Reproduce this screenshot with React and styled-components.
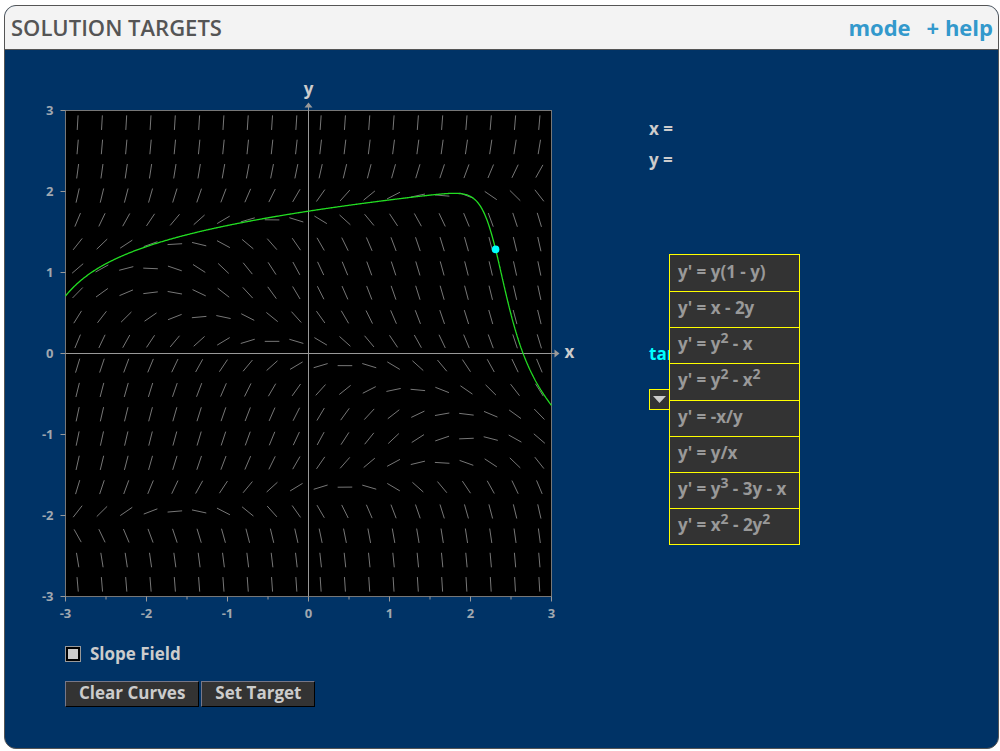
import React, { useState } from "react";
import styled, { createGlobalStyle } from "styled-components";

const GlobalStyle = createGlobalStyle`
  * {
    box-sizing: border-box;
  }

  body {
    margin: 0;
    background-color: #fff;
    font-family: "Open Sans", "Noto Sans", sans-serif;
    font-weight: 700;
  }
`;

const Frame = styled.main`
  display: flex;
  flex-direction: column;
  min-height: calc(100vh - 7px);
  margin: 5px 1px 2px 4px;
  border: 1px solid #555;
  border-radius: 12px;
  background-color: #003366;
  overflow: hidden;
`;

const Header = styled.header`
  display: flex;
  align-items: center;
  justify-content: space-between;
  height: 44px;
  padding: 0 5px 2px 6px;
  border-bottom: 1px solid #555;
  background-color: #f3f3f3;
`;

const Title = styled.h1`
  margin: 0;
  font-size: 22px;
  font-weight: 600;
  line-height: 30px;
  color: #555;
`;

const Nav = styled.nav`
  display: flex;
  gap: 16px;
`;

const NavLink = styled.a`
  font-size: 22px;
  line-height: 30px;
  color: #3399cc;
  text-decoration: none;
`;

const Body = styled.div`
  display: flex;
  gap: 64px;
  padding: 30px 35px;
`;

const Plot = styled.svg`
  display: block;
  width: 545px;
  height: 545px;
  overflow: visible;
`;

const AxisName = styled.text`
  font-size: 17px;
  fill: #ccc;
  text-anchor: middle;
`;

const TickLabel = styled.text`
  font-size: 13px;
  fill: #a0a8b0;
  text-anchor: ${(props) => props.$anchor || "middle"};
`;

const Controls = styled.div`
  display: flex;
  flex-direction: column;
  gap: 14px;
  padding: 16px 25px 0;
`;

const CheckLabel = styled.label`
  display: flex;
  align-items: center;
  gap: 9px;
  font-size: 17px;
  line-height: 26px;
  color: #ccc;
`;

const Checkbox = styled.input`
  appearance: none;
  width: 16px;
  height: 16px;
  margin: 0;
  border: 1px solid #999;
  background-color: #000;

  &:checked {
    background-color: #ccc;
    box-shadow: inset 0 0 0 2px #000;
  }
`;

const ButtonRow = styled.div`
  display: flex;
  gap: 2px;
`;

const Button = styled.button`
  height: 26px;
  padding: 0 13px 3px;
  border: 1px solid;
  border-color: #778 #000 #000 #778;
  background-color: #333;
  color: #ccc;
  font: inherit;
  font-size: 17px;
  line-height: 21px;
`;

const Side = styled.aside`
  flex: 1;
  padding-top: 33px;
`;

const Readout = styled.div`
  height: 31px;
  font-size: 17px;
  line-height: 31px;
  color: #ccc;
`;

const Target = styled.div`
  margin-top: 163px;
  font-size: 17px;
  line-height: 31px;
  color: #00ffff;
`;

const Picker = styled.div`
  position: relative;
  width: 20px;
  margin-top: 20px;
`;

const PickerButton = styled.button`
  display: flex;
  align-items: center;
  justify-content: center;
  width: 21px;
  height: 21px;
  padding: 0;
  border: 1px solid #ffff00;
  background-color: #333;
`;

const Menu = styled.ul`
  position: absolute;
  top: -135px;
  left: 100%;
  display: grid;
  grid-template-columns: minmax(0, 1fr);
  grid-template-rows: repeat(8, 1fr);
  width: 131px;
  height: 291px;
  margin: 0;
  padding: 0;
  border: 1px solid #ffff00;
  list-style: none;
`;

const MenuItem = styled.li`
  display: flex;

  & + & {
    border-top: 1px solid #ffff00;
  }
`;

const MenuButton = styled.button`
  flex: 1;
  padding: 0 8px 3px;
  border: 0;
  background-color: #333;
  color: #999;
  font: inherit;
  font-size: 17px;
  line-height: 24px;
  text-align: left;
  white-space: nowrap;

  sup {
    font-size: 14px;
    line-height: 0;
  }
`;

const equations = [
  <>y' = y(1 - y)</>,
  <>y' = x - 2y</>,
  <>y' = y<sup>2</sup> - x</>,
  <>y' = y<sup>2</sup> - x<sup>2</sup></>,
  <>y' = -x/y</>,
  <>y' = y/x</>,
  <>y' = y<sup>3</sup> - 3y - x</>,
  <>y' = x<sup>2</sup> - 2y<sup>2</sup></>,
];

const UNIT = 81;
const LEFT = 25.5;
const TOP = 30.5;
const RIGHT = LEFT + 6 * UNIT;
const BOTTOM = TOP + 6 * UNIT;
const toX = (x) => LEFT + (x + 3) * UNIT;
const toY = (y) => TOP + (3 - y) * UNIT;

const slope = (x, y) => y ** 3 - 3 * y - x;
const start = { x: 2.31, y: 1.285 };

// Runge-Kutta from the starting point to one edge of the plot
const solve = (end) => {
  const steps = 600;
  const h = (end - start.x) / steps;
  const points = [];
  let { x, y } = start;
  for (let i = 0; i <= steps; i++) {
    points.push(`${toX(x).toFixed(2)},${toY(y).toFixed(2)}`);
    const k1 = slope(x, y);
    const k2 = slope(x + h / 2, y + (h * k1) / 2);
    const k3 = slope(x + h / 2, y + (h * k2) / 2);
    const k4 = slope(x + h, y + h * k3);
    y += (h * (k1 + 2 * k2 + 2 * k3 + k4)) / 6;
    x += h;
  }
  return points;
};

const curve = [...solve(-3).reverse(), ...solve(3)].join(" ");

const segments = [];
for (let i = 0; i < 20; i++) {
  for (let j = 0; j < 20; j++) {
    const x = -2.85 + i * 0.3;
    const y = -2.85 + j * 0.3;
    const angle = Math.atan(slope(x, y));
    const dx = 7.3 * Math.cos(angle);
    const dy = 7.3 * Math.sin(angle);
    segments.push(
      `M${(toX(x) - dx).toFixed(2)} ${(toY(y) + dy).toFixed(2)}` +
        `L${(toX(x) + dx).toFixed(2)} ${(toY(y) - dy).toFixed(2)}`
    );
  }
}

const ticks = [-3, -2, -1, 0, 1, 2, 3];
const halfTicks = [-2.5, -1.5, -0.5, 0.5, 1.5, 2.5];

const SlopePlot = ({ showField, showCurve }) => (
  <Plot role="img" aria-label="Slope field with a solution curve">
    <rect x={LEFT} y={TOP} width={6 * UNIT} height={6 * UNIT} fill="#000" />
    {showField && <path d={segments.join("")} stroke="#777" fill="none" />}
    <rect
      x={LEFT}
      y={TOP}
      width={6 * UNIT}
      height={6 * UNIT}
      fill="none"
      stroke="#777"
    />
    {ticks.map((t) => (
      <g key={t}>
        <path
          d={`M${LEFT} ${toY(t)}h-5M${toX(t)} ${BOTTOM}v5`}
          stroke="#999"
        />
        <TickLabel x={toX(t)} y={BOTTOM + 21}>
          {t}
        </TickLabel>
        <TickLabel x={LEFT - 12} y={toY(t) + 4} $anchor="end">
          {t}
        </TickLabel>
      </g>
    ))}
    {halfTicks.map((t) => (
      <path key={t} d={`M${toX(t)} ${BOTTOM}v3`} stroke="#999" />
    ))}
    <path
      d={`M${LEFT} ${toY(0)}H${RIGHT + 4}M${toX(0)} ${BOTTOM}V${TOP - 4}`}
      stroke="#999"
    />
    <path
      d={`M${RIGHT + 3} ${toY(0) - 4}l5 4l-5 4zM${toX(0) - 4} ${TOP - 3}l4 -5l4 5z`}
      fill="#999"
    />
    <AxisName x={toX(0)} y={TOP - 16}>
      y
    </AxisName>
    <AxisName x={RIGHT + 18} y={toY(0) + 4}>
      x
    </AxisName>
    {showCurve && (
      <>
        <polyline points={curve} fill="none" stroke="#22dd22" strokeWidth="1.3" />
        <circle cx={toX(start.x)} cy={toY(start.y)} r="3.8" fill="#00ffff" />
      </>
    )}
  </Plot>
);

const App = () => {
  const [showField, setShowField] = useState(true);
  const [showCurve, setShowCurve] = useState(true);
  const [open, setOpen] = useState(true);

  return (
    <>
      <GlobalStyle />
      <Frame>
        <Header>
          <Title>SOLUTION TARGETS</Title>
          <Nav>
            <NavLink href="#mode">mode</NavLink>
            <NavLink href="#help">+ help</NavLink>
          </Nav>
        </Header>
        <Body>
          <div>
            <SlopePlot showField={showField} showCurve={showCurve} />
            <Controls>
              <CheckLabel>
                <Checkbox
                  type="checkbox"
                  checked={showField}
                  onChange={(e) => setShowField(e.target.checked)}
                />
                Slope Field
              </CheckLabel>
              <ButtonRow>
                <Button type="button" onClick={() => setShowCurve(false)}>
                  Clear Curves
                </Button>
                <Button type="button">Set Target</Button>
              </ButtonRow>
            </Controls>
          </div>
          <Side>
            <Readout>x =</Readout>
            <Readout>y =</Readout>
            <Target>target</Target>
            <Picker>
              <PickerButton
                type="button"
                aria-label="Choose equation"
                aria-expanded={open}
                onClick={() => setOpen(!open)}
              >
                <svg width="13" height="7" viewBox="0 0 13 7">
                  <path d="M0 0H13L6.5 7Z" fill="#ccc" />
                </svg>
              </PickerButton>
              {open && (
                <Menu>
                  {equations.map((equation, i) => (
                    <MenuItem key={i}>
                      <MenuButton type="button" onClick={() => setOpen(false)}>
                        {equation}
                      </MenuButton>
                    </MenuItem>
                  ))}
                </Menu>
              )}
            </Picker>
          </Side>
        </Body>
      </Frame>
    </>
  );
};

export default App;
